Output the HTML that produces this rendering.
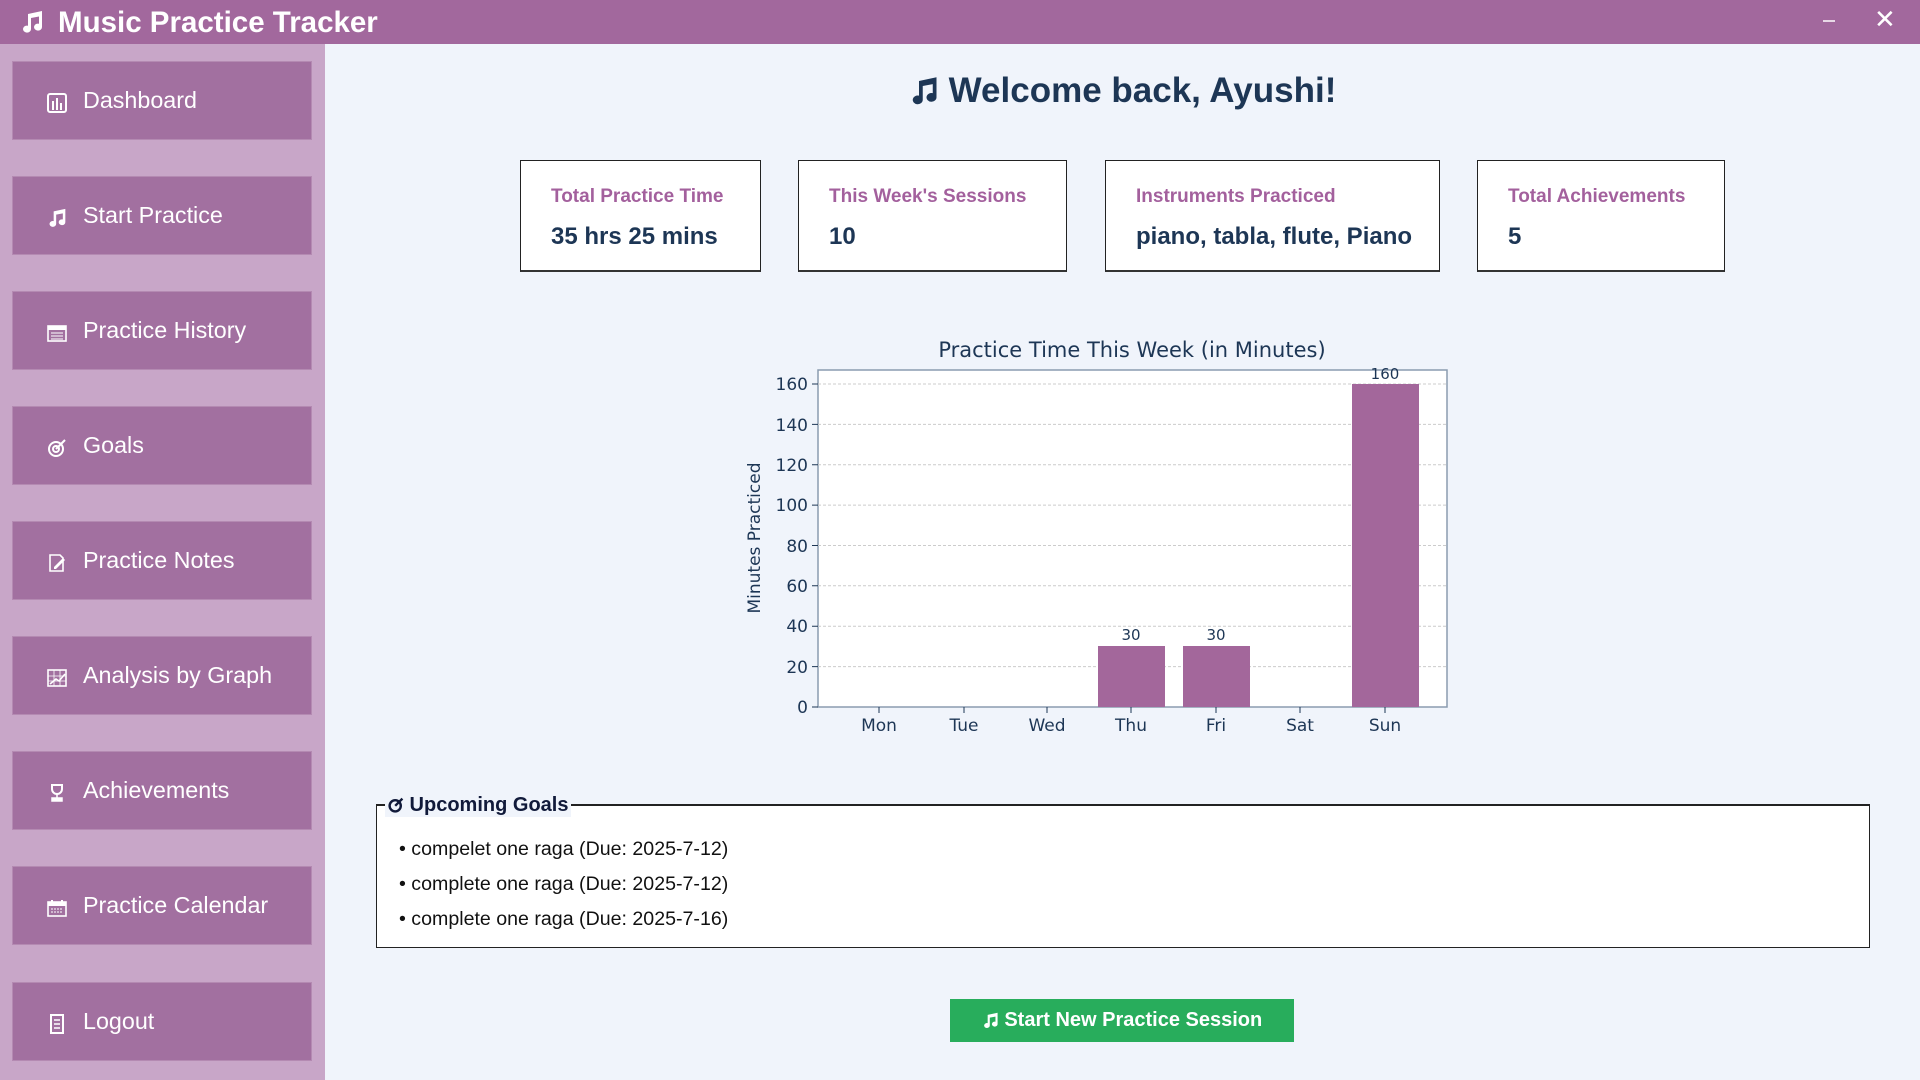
<!DOCTYPE html>
<html><head><meta charset="utf-8"><style>
*{margin:0;padding:0;box-sizing:border-box}
body{width:1920px;height:1080px;background:#f0f4fb;font-family:"Liberation Sans",Arial,sans-serif;position:relative;overflow:hidden}
.title{position:absolute;left:0;top:0;width:1920px;height:44px;background:#a2689d;color:#fff}
.title .t{position:absolute;left:58px;top:6px;font-size:29.5px;font-weight:bold}
.side{position:absolute;left:0;top:44px;width:325px;height:1036px;background:#c8a6c8}
.btn{position:absolute;left:12px;width:300px;height:79px;background:#a270a0;border:1px solid #b48ab2;color:#fff;font-size:23.3px}
.btn span{position:absolute;left:70px;top:25px}
.btn svg{position:absolute;left:34px;top:31px}
.h{position:absolute;left:0;width:100%;top:71px;text-align:center;font-size:35px;font-weight:bold;color:#1d3655;padding-left:325px}
.card{position:absolute;top:160px;height:112px;background:#fff;border:1px solid #222;border-bottom:2px solid #333}
.card .l{position:absolute;left:30px;top:25px;font-size:19px;font-weight:bold;color:#a3609d}
.card .v{position:absolute;left:30px;top:62px;font-size:24px;font-weight:bold;color:#1d3655}
.goals{position:absolute;left:376px;top:804px;width:1494px;height:144px;border:1px solid #222;border-top:2px solid #222;background:#fff}
.goals .lg{position:absolute;left:8px;top:-12px;background:#f0f4fb;padding:0 3px;font-size:20px;font-weight:bold;color:#111a3a}
.goals p{position:absolute;left:22px;font-size:19.6px;color:#111}
.go{position:absolute;left:950px;top:999px;width:344px;height:43px;background:#28ad5c;color:#fff;font-size:20px;font-weight:bold;text-align:center;line-height:43px}
</style></head><body>
<div class="title">
<svg style="position:absolute;left:20px;top:10px" width="24" height="24" viewBox="0 0 24 24"><path d="M8 4l14-3v16a4 3.5 0 1 1-3-3.3V6.5L11 8v11a4 3.5 0 1 1-3-3.3z" fill="#fff"/></svg>
<div class="t">Music Practice Tracker</div>
<div style="position:absolute;left:1823px;top:20px;width:12px;height:1.5px;background:#e8d8e6"></div>
<div style="position:absolute;left:1874px;top:4px;color:#fff;font-size:26px">✕</div>
</div>
<div class="side">
<div class="btn" style="top:17px"><svg width="20" height="20" viewBox="0 0 20 20"><rect x="1" y="1" width="18" height="18" rx="2" fill="none" stroke="#fff" stroke-width="2"/><rect x="5" y="8" width="2" height="9" fill="#fff"/><rect x="9" y="5" width="2" height="12" fill="#fff"/><rect x="13" y="10" width="2" height="7" fill="#fff"/></svg><span>Dashboard</span></div>
<div class="btn" style="top:132px"><svg width="20" height="20" viewBox="0 0 24 24"><path d="M8 4l14-3v16a4 3.5 0 1 1-3-3.3V6.5L11 8v11a4 3.5 0 1 1-3-3.3z" fill="#fff"/></svg><span>Start Practice</span></div>
<div class="btn" style="top:247px"><svg width="20" height="20" viewBox="0 0 20 20"><rect x="1" y="3" width="18" height="15" fill="none" stroke="#fff" stroke-width="1.6"/><rect x="1" y="3" width="18" height="4" fill="#fff"/><path d="M4 10h12M4 13h12M4 16h12" stroke="#fff"/></svg><span>Practice History</span></div>
<div class="btn" style="top:362px"><svg width="20" height="20" viewBox="0 0 20 20"><circle cx="9" cy="11" r="7" fill="none" stroke="#fff" stroke-width="2"/><circle cx="9" cy="11" r="3" fill="none" stroke="#fff" stroke-width="2"/><path d="M9 11l9-9" stroke="#fff" stroke-width="2"/></svg><span>Goals</span></div>
<div class="btn" style="top:477px"><svg width="20" height="20" viewBox="0 0 20 20"><path d="M3 2h10l3 3v13H3z" fill="none" stroke="#fff" stroke-width="1.6"/><path d="M7 14l9-9 2 2-9 9H7z" fill="#fff"/></svg><span>Practice Notes</span></div>
<div class="btn" style="top:592px"><svg width="20" height="20" viewBox="0 0 20 20"><rect x="1" y="2" width="18" height="16" fill="none" stroke="#fff" stroke-width="1.6"/><path d="M1 8h18M1 13h18M7 2v16M13 2v16" stroke="#fff" stroke-width=".8"/><path d="M3 16l6-5 3 2 6-7" stroke="#fff" stroke-width="1.6" fill="none"/></svg><span>Analysis by Graph</span></div>
<div class="btn" style="top:707px"><svg width="20" height="20" viewBox="0 0 20 20"><path d="M5 2h10v4a5 5 0 0 1-10 0z" fill="none" stroke="#fff" stroke-width="2"/><path d="M10 11v4M5 18h10v-3H5z" fill="#fff" stroke="#fff" stroke-width="1.5"/></svg><span>Achievements</span></div>
<div class="btn" style="top:822px"><svg width="20" height="20" viewBox="0 0 20 20"><rect x="1" y="4" width="18" height="14" fill="none" stroke="#fff" stroke-width="1.6"/><rect x="1" y="4" width="18" height="4" fill="#fff"/><path d="M5 2v4M15 2v4" stroke="#fff" stroke-width="2"/><path d="M4 11h12M4 14h12" stroke="#fff" stroke-dasharray="2 1"/></svg><span>Practice Calendar</span></div>
<div class="btn" style="top:938px"><svg width="20" height="20" viewBox="0 0 20 20"><rect x="4" y="1" width="12" height="18" fill="none" stroke="#fff" stroke-width="2"/><path d="M7 6h6M7 10h6M7 14h6" stroke="#fff" stroke-width="1.5"/></svg><span>Logout</span></div>
</div>
<div class="h"><svg style="vertical-align:-4px;margin-right:10px" width="30" height="30" viewBox="0 0 24 24"><path d="M8 4l14-3v16a4 3.5 0 1 1-3-3.3V6.5L11 8v11a4 3.5 0 1 1-3-3.3z" fill="#1d3655"/></svg>Welcome back, Ayushi!</div>
<div class="card" style="left:520px;width:241px"><div class="l">Total Practice Time</div><div class="v">35 hrs 25 mins</div></div>
<div class="card" style="left:798px;width:269px"><div class="l">This Week's Sessions</div><div class="v">10</div></div>
<div class="card" style="left:1105px;width:335px"><div class="l">Instruments Practiced</div><div class="v">piano, tabla, flute, Piano</div></div>
<div class="card" style="left:1477px;width:248px"><div class="l">Total Achievements</div><div class="v">5</div></div>
<svg style="position:absolute;left:0;top:0" width="1920" height="1080" font-family="DejaVu Sans,sans-serif" fill="#1d3655">
<rect x="818" y="370" width="629" height="337" fill="#fff" stroke="#8a9bb0" stroke-width="1.5"/>
<g stroke="#ccc" stroke-dasharray="3 2" stroke-width="1">
<line x1="818" x2="1447" y1="666.6" y2="666.6"/><line x1="818" x2="1447" y1="626.2" y2="626.2"/><line x1="818" x2="1447" y1="585.8" y2="585.8"/><line x1="818" x2="1447" y1="545.5" y2="545.5"/><line x1="818" x2="1447" y1="505.1" y2="505.1"/><line x1="818" x2="1447" y1="464.8" y2="464.8"/><line x1="818" x2="1447" y1="424.4" y2="424.4"/><line x1="818" x2="1447" y1="384" y2="384"/>
</g>
<g fill="#a3679b"><rect x="1098" y="646" width="67" height="61"/><rect x="1183" y="646" width="67" height="61"/><rect x="1352" y="384" width="67" height="323"/></g>
<g stroke="#1d3655"><path d="M812 707h6M812 666.6h6M812 626.2h6M812 585.8h6M812 545.5h6M812 505.1h6M812 464.8h6M812 424.4h6M812 384h6M879 707v6M964 707v6M1047 707v6M1131 707v6M1216 707v6M1300 707v6M1385 707v6"/></g>
<g font-size="17" text-anchor="end"><text x="808" y="713">0</text><text x="808" y="673">20</text><text x="808" y="632">40</text><text x="808" y="592">60</text><text x="808" y="552">80</text><text x="808" y="511">100</text><text x="808" y="471">120</text><text x="808" y="431">140</text><text x="808" y="390">160</text></g>
<g font-size="17" text-anchor="middle"><text x="879" y="731">Mon</text><text x="964" y="731">Tue</text><text x="1047" y="731">Wed</text><text x="1131" y="731">Thu</text><text x="1216" y="731">Fri</text><text x="1300" y="731">Sat</text><text x="1385" y="731">Sun</text>
<text x="1131" y="640" font-size="15">30</text><text x="1216" y="640" font-size="15">30</text><text x="1385" y="379" font-size="15">160</text>
<text x="1132" y="357" font-size="21">Practice Time This Week (in Minutes)</text>
<text transform="translate(760 538) rotate(-90)" font-size="17">Minutes Practiced</text></g>
</svg>
<div class="goals"><div class="lg"><svg style="vertical-align:-2px" width="16" height="16" viewBox="0 0 20 20"><circle cx="9" cy="11" r="7" fill="none" stroke="#111a3a" stroke-width="3"/><path d="M9 11l9-9" stroke="#111a3a" stroke-width="3"/></svg> Upcoming Goals</div>
<p style="top:32px">• compelet one raga (Due: 2025-7-12)</p>
<p style="top:67px">• complete one raga (Due: 2025-7-12)</p>
<p style="top:102px">• complete one raga (Due: 2025-7-16)</p></div>
<div class="go"><svg style="vertical-align:-3px" width="17" height="17" viewBox="0 0 24 24"><path d="M8 4l14-3v16a4 3.5 0 1 1-3-3.3V6.5L11 8v11a4 3.5 0 1 1-3-3.3z" fill="#fff"/></svg> Start New Practice Session</div>
</body></html>
